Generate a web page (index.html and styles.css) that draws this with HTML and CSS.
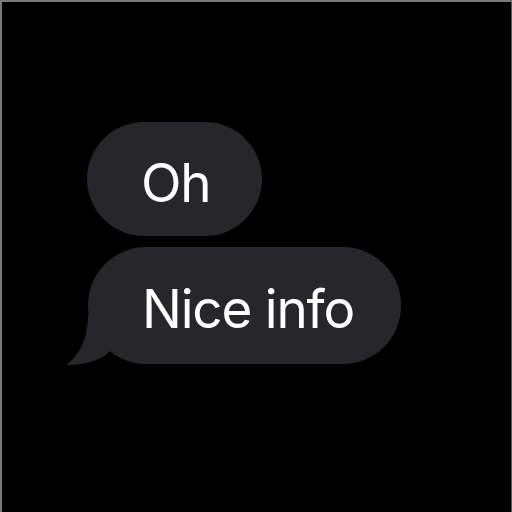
FILE: index.html
```html
<html lang="en">
<head>
    <meta charset="UTF-8">
    <title>Messages</title>
    <link rel="stylesheet" href="styles.css">
</head>
<body>
    <div class="screen">
        <div class="thread">
            <div class="bubble">Oh</div>
            <div class="bubble last">
                Nice info
                <svg class="tail" width="50" height="50" viewBox="0 0 50 50">
                    <path d="M22 0 C22 24 13 41 0 50 C15 50 30 47 40 40 L50 30 L50 0 Z"/>
                </svg>
            </div>
        </div>
    </div>
</body>
</html>
```

FILE: styles.css
```css
* {
    box-sizing: border-box;
}

body {
    margin: 0;
    background: #000;
    font-family: "Inter", "Liberation Sans", sans-serif;
}

.screen {
    width: 512px;
    height: 512px;
    border-top: 2px solid #7a7a7a;
    border-left: 2px solid #7a7a7a;
    border-right: 1px solid #5a5a5a;
    background: #000;
    padding: 120px 0 0 85px;
}

.thread {
    display: flex;
    flex-direction: column;
    align-items: flex-start;
    gap: 11px;
}

.bubble {
    position: relative;
    height: 114px;
    line-height: 106px;
    padding: 8px 52px 0 54px;
    border-radius: 57px;
    background: #27262b;
    color: #fff;
    font-size: 53px;
    letter-spacing: -1.2px;
}

.bubble.last {
    margin-left: 1px;
    height: 117px;
    line-height: 109px;
    border-radius: 58px;
    padding: 8px 47px 0 54px;
}

.tail {
    position: absolute;
    left: -22px;
    bottom: -1px;
    fill: #27262b;
}
```
